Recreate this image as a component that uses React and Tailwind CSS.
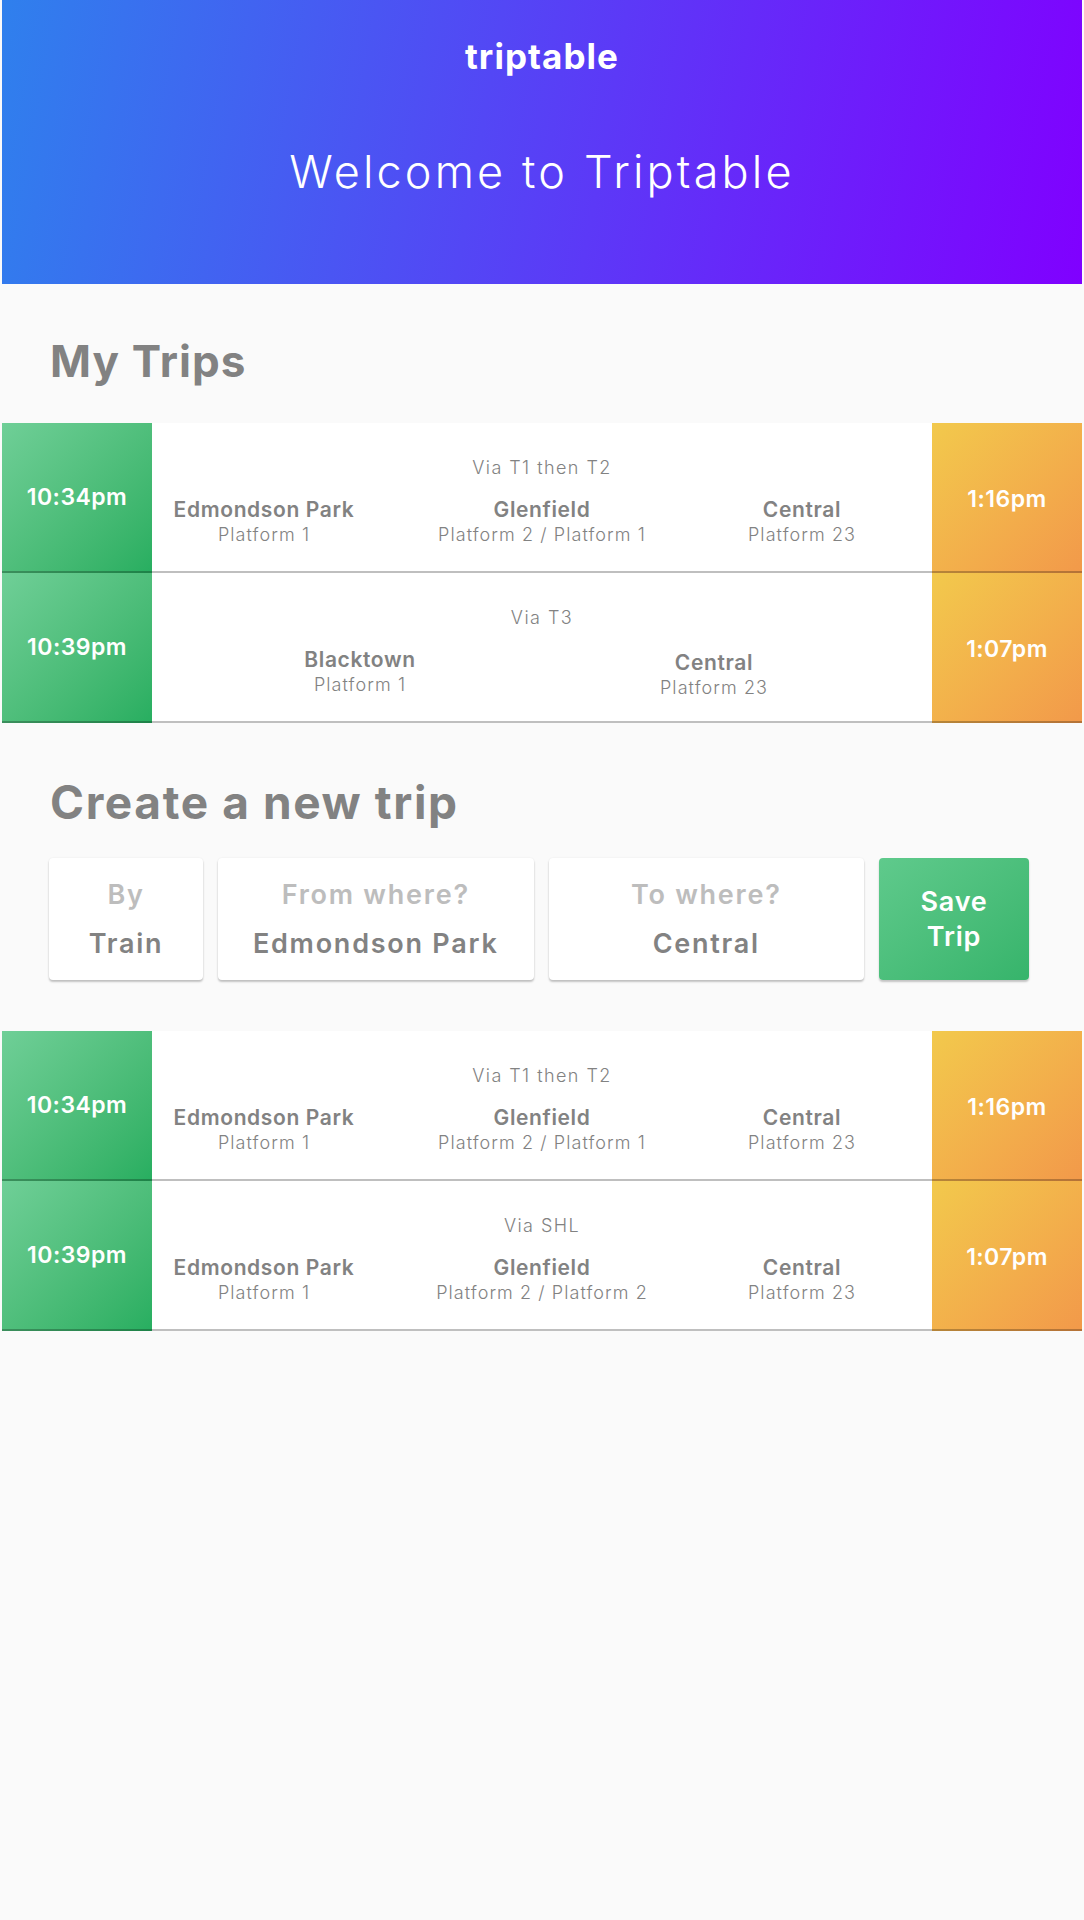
import React from "react";

const myTrips = [
  {
    dep: "10:34pm",
    arr: "1:16pm",
    via: "Via T1 then T2",
    stops: [
      { name: "Edmondson Park", platform: "Platform 1" },
      { name: "Glenfield", platform: "Platform 2 / Platform 1" },
      { name: "Central", platform: "Platform 23" },
    ],
  },
  {
    dep: "10:39pm",
    arr: "1:07pm",
    via: "Via T3",
    stops: [
      { name: "Blacktown", platform: "Platform 1" },
      { name: "Central", platform: "Platform 23", low: true },
    ],
  },
];

const results = [
  {
    dep: "10:34pm",
    arr: "1:16pm",
    via: "Via T1 then T2",
    stops: [
      { name: "Edmondson Park", platform: "Platform 1" },
      { name: "Glenfield", platform: "Platform 2 / Platform 1" },
      { name: "Central", platform: "Platform 23" },
    ],
  },
  {
    dep: "10:39pm",
    arr: "1:07pm",
    via: "Via SHL",
    stops: [
      { name: "Edmondson Park", platform: "Platform 1" },
      { name: "Glenfield", platform: "Platform 2 / Platform 2" },
      { name: "Central", platform: "Platform 23" },
    ],
  },
];

function TripRow({ trip }) {
  const cols =
    trip.stops.length === 3
      ? "grid-cols-[224px_332px_188px]"
      : "grid-cols-[416px_292px]";
  return (
    <div className="flex h-[150px]">
      <div className="w-[150px] flex items-center justify-center bg-linear-to-br from-[#6fcf97] to-[#27ae60] bg-origin-border border-b-2 border-black/25 text-white text-[23px] font-semibold tracking-[0.02em]">
        {trip.dep}
      </div>
      <div className="flex-1 flex flex-col bg-white border-b-2 border-black/25">
        <div className="pt-[36px] text-center text-[18px] leading-none font-light text-[#828282] tracking-[0.08em]">
          {trip.via}
        </div>
        <div className={"grid mt-[21px] " + cols}>
          {trip.stops.map((s, i) => (
            <div
              key={i}
              className={"flex flex-col items-center " + (s.low ? "pt-[3px]" : "")}
            >
              <div className="text-[21px] leading-[24px] font-semibold text-[#828282] tracking-[0.03em]">
                {s.name}
              </div>
              <div className="mt-[2px] text-[18px] leading-[22px] font-light text-[#828282] tracking-[0.06em]">
                {s.platform}
              </div>
            </div>
          ))}
        </div>
      </div>
      <div className="w-[150px] flex items-center justify-center pt-[5px] bg-linear-to-br from-[#f2c94c] to-[#f2994a] bg-origin-border border-b-2 border-black/25 text-white text-[23px] font-semibold tracking-[0.02em]">
        {trip.arr}
      </div>
    </div>
  );
}

function Field({ label, value, className }) {
  return (
    <div
      className={
        "h-[122px] flex flex-col items-center pt-[23px] bg-white rounded-[4px] shadow-[0_2px_2px_rgba(0,0,0,0.22),0_0_2px_rgba(0,0,0,0.08)] " +
        className
      }
    >
      <div className="text-[27px] leading-none font-semibold text-[#bdbdbd] tracking-[0.065em]">
        {label}
      </div>
      <div className="mt-[22px] text-[27px] leading-none font-semibold text-[#828282] tracking-[0.065em]">
        {value}
      </div>
    </div>
  );
}

export default function App() {
  return (
    <div className="min-h-screen bg-[#fafafa] px-[2px] font-[Inter,sans-serif]">
      <header className="h-[284px] flex flex-col items-center bg-[linear-gradient(100deg,#2f80ed,#8000ff)] text-white">
        <div className="mt-[39px] text-[35px] leading-none font-bold tracking-[0.03em]">
          triptable
        </div>
        <h1 className="mt-[75px] text-[45px] leading-none font-light tracking-[0.07em]">
          Welcome to Triptable
        </h1>
      </header>

      <h2 className="mt-[55px] pl-[48px] text-[44px] leading-none font-bold text-[#828282] tracking-[0.025em]">
        My Trips
      </h2>
      <div className="mt-[40px]">
        {myTrips.map((t, i) => (
          <TripRow key={i} trip={t} />
        ))}
      </div>

      <h2 className="mt-[56px] pl-[48px] text-[46px] leading-none font-bold text-[#828282] tracking-[0.035em]">
        Create a new trip
      </h2>
      <div className="mt-[33px] flex gap-[15px] pl-[47px] pr-[53px]">
        <Field label="By" value="Train" className="w-[154px]" />
        <Field label="From where?" value="Edmondson Park" className="flex-1" />
        <Field label="To where?" value="Central" className="flex-1" />
        <button className="w-[150px] h-[122px] rounded-[4px] bg-linear-to-br from-[#5fca8c] to-[#36b46b] shadow-[0_2px_2px_rgba(0,0,0,0.22)] text-white text-[27px] leading-[35px] font-semibold tracking-[0.03em]">
          Save
          <br />
          Trip
        </button>
      </div>

      <div className="mt-[51px]">
        {results.map((t, i) => (
          <TripRow key={i} trip={t} />
        ))}
      </div>
    </div>
  );
}
